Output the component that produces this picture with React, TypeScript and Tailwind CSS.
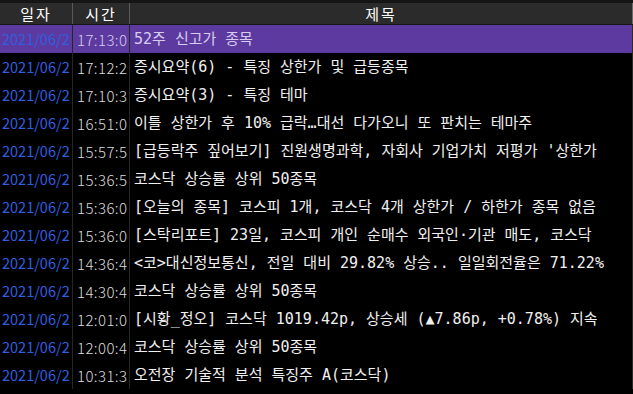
import React from "react";

// --- DATA ---
const ROWS = [
  { date: "2021/06/2", time: "17:13:0", title: "52주 신고가 종목" },
  { date: "2021/06/2", time: "17:12:2", title: "증시요약(6) - 특징 상한가 및 급등종목" },
  { date: "2021/06/2", time: "17:10:3", title: "증시요약(3) - 특징 테마" },
  { date: "2021/06/2", time: "16:51:0", title: "이틀 상한가 후 10% 급락…대선 다가오니 또 판치는 테마주" },
  { date: "2021/06/2", time: "15:57:5", title: "[급등락주 짚어보기] 진원생명과학, 자회사 기업가치 저평가 '상한가" },
  { date: "2021/06/2", time: "15:36:5", title: "코스닥 상승률 상위 50종목" },
  { date: "2021/06/2", time: "15:36:0", title: "[오늘의 종목] 코스피 1개, 코스닥 4개 상한가 / 하한가 종목 없음" },
  { date: "2021/06/2", time: "15:36:0", title: "[스탁리포트] 23일, 코스피 개인 순매수 외국인·기관 매도, 코스닥" },
  { date: "2021/06/2", time: "14:36:4", title: "<코>대신정보통신, 전일 대비 29.82% 상승.. 일일회전율은 71.22%" },
  { date: "2021/06/2", time: "14:30:4", title: "코스닥 상승률 상위 50종목" },
  { date: "2021/06/2", time: "12:01:0", title: "[시황_정오] 코스닥 1019.42p, 상승세 (▲7.86p, +0.78%) 지속" },
  { date: "2021/06/2", time: "12:00:4", title: "코스닥 상승률 상위 50종목" },
  { date: "2021/06/2", time: "10:31:3", title: "오전장 기술적 분석 특징주 A(코스닥)" },
];

export default function App() {
  return (
    <div className="w-[633px] h-[394px] overflow-hidden bg-black font-['Noto_Sans_CJK_KR',sans-serif] text-[14px] leading-none">
      <div className="h-[3px] bg-[#151515]" />

      {/* --- HEADER --- */}
      <div className="flex h-[22px] bg-[#2b2b2b] text-white text-[15px] border-b border-[#161616]">
        <div className="w-[73px] shrink-0 flex items-center justify-center border-r border-[#5a5a5a] tracking-[2px]">일자</div>
        <div className="w-[57px] shrink-0 flex items-center justify-center border-r border-[#5a5a5a] tracking-[2px]">시간</div>
        <div className="w-[503px] shrink-0 flex items-center justify-center border-r border-[#6a6a6a] tracking-[2px]">제목</div>
      </div>

      {/* --- ROWS --- */}
      {ROWS.map((row, i) => {
        const selected = i === 0;
        return (
          <div
            key={i}
            className={
              selected
                ? "flex h-[28px] items-center bg-[#5c3a9f] text-[#d6cdee]"
                : "flex h-[28px] items-center text-[#f0f0f0]"
            }
          >
            <div className="w-[73px] h-full shrink-0 flex items-center pl-[2px] overflow-hidden whitespace-nowrap border-r border-[#262626] text-[#2f5fe0] text-[14.5px]">
              {row.date}
            </div>
            <div
              className={
                selected
                  ? "w-[57px] h-full shrink-0 flex items-center pl-[4px] overflow-hidden whitespace-nowrap border-r border-[#262626] font-light text-[15px] tracking-[0.4px]"
                  : "w-[57px] h-full shrink-0 flex items-center pl-[4px] overflow-hidden whitespace-nowrap border-r border-[#262626] font-light text-[15px] tracking-[0.4px] text-[#dcdcdc]"
              }
            >
              {row.time}
            </div>
            <div className="w-[503px] h-full shrink-0 flex items-center pl-[4px] overflow-hidden whitespace-pre border-r border-[#2a2a2a] text-[15px] font-['DejaVu_Sans_Mono','Noto_Sans_CJK_KR',monospace]">
              {row.title}
            </div>
          </div>
        );
      })}
    </div>
  );
}
